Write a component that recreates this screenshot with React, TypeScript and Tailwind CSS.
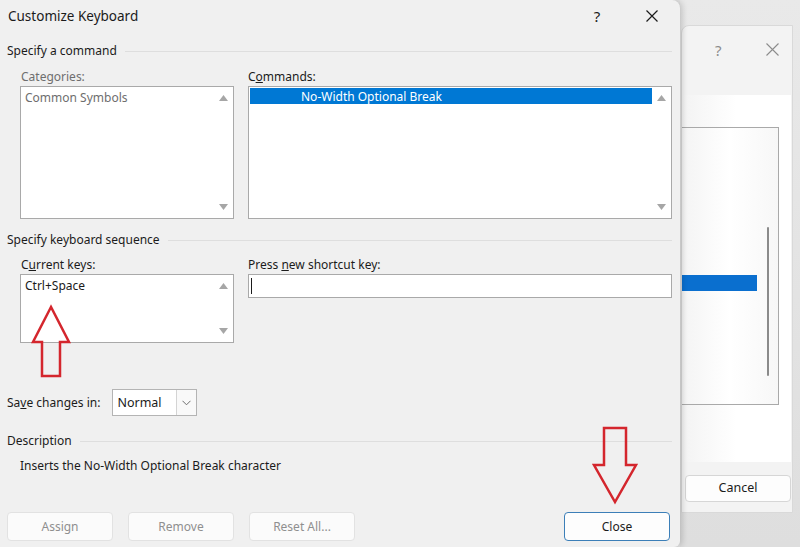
import React from 'react';

const font = { fontFamily: '"Noto Sans", "Open Sans", sans-serif' };

const Up = ({ c = '#a6a6a6' }: { c?: string }) => (
  <svg width="9" height="6" viewBox="0 0 9 6">
    <polygon points="4.5,0 9,6 0,6" fill={c} />
  </svg>
);

const Down = ({ c = '#a6a6a6' }: { c?: string }) => (
  <svg width="9" height="6" viewBox="0 0 9 6">
    <polygon points="0,0 9,0 4.5,6" fill={c} />
  </svg>
);

const Scroll = () => (
  <div className="w-[19px] flex flex-col justify-between items-center py-[8px]">
    <Up />
    <Down />
  </div>
);

const GroupHeader = ({ title }: { title: string }) => (
  <div className="flex items-center pl-[7px] pr-[8px] gap-[8px] text-[12px] text-[#1b1b1b]">
    <span>{title}</span>
    <div className="flex-1 h-px bg-[#dedede]" />
  </div>
);

const Btn = ({ label, primary }: { label: string; primary?: boolean }) => (
  <div
    className={
      'w-[106px] h-[29px] rounded-[4px] flex items-center justify-center text-[12px] ' +
      (primary
        ? 'border border-[#3c7fb8] bg-[#fdfdfd] text-[#1b1b1b]'
        : 'border border-[#e2e2e2] bg-[#fbfbfb] text-[#8f8f8f]')
    }
  >
    {label}
  </div>
);

const App = () => {
  return (
    <div className="w-[800px] h-[547px] flex bg-[#e4e4e4] overflow-hidden relative" style={font}>
      {/* main dialog */}
      <div className="w-[680px] h-[547px] bg-[#f0f0f0] rounded-tr-[8px] rounded-br-[6px] shadow-[2px_0_6px_rgba(0,0,0,0.18)] z-10 flex flex-col shrink-0">
        <div className="h-[32px] flex items-center pl-[8px] pr-[22px]">
          <span className="text-[13.5px] text-[#1b1b1b] flex-1">Customize Keyboard</span>
          <span className="text-[15px] text-[#1b1b1b] w-[20px] text-center mr-[39px]">?</span>
          <svg width="12" height="12" viewBox="0 0 12 12">
            <path d="M0.5 0.5 L11.5 11.5 M11.5 0.5 L0.5 11.5" stroke="#1b1b1b" strokeWidth="1.2" />
          </svg>
        </div>

        <div className="mt-[10px]">
          <GroupHeader title="Specify a command" />
        </div>

        <div className="flex gap-[14px] pl-[20px] mt-[6px]">
          <div className="w-[214px] flex flex-col">
            <div className="text-[12px] text-[#6e6e6e] h-[20px] leading-[22px] pl-px">Categories:</div>
            <div className="h-[133px] border border-[#a9a9a9] bg-white flex">
              <div className="flex-1 pl-[4px] pt-[2px] text-[12px] text-[#6e6e6e]">Common Symbols</div>
              <Scroll />
            </div>
          </div>
          <div className="w-[424px] flex flex-col">
            <div className="text-[12px] text-[#1b1b1b] h-[20px] leading-[22px]">
              C<u>o</u>mmands:
            </div>
            <div className="h-[133px] border border-[#a9a9a9] bg-white flex">
              <div className="flex-1 pl-px pt-px">
                <div className="h-[16px] bg-[#0078d4] text-white text-[12px] leading-[17px] pl-[51px]">
                  No-Width Optional Break
                </div>
              </div>
              <Scroll />
            </div>
          </div>
        </div>

        <div className="mt-[12px]">
          <GroupHeader title="Specify keyboard sequence" />
        </div>

        <div className="flex gap-[14px] pl-[20px] mt-[5px]">
          <div className="w-[214px] flex flex-col">
            <div className="text-[12px] text-[#1b1b1b] h-[20px] leading-[22px] pl-px">
              C<u>u</u>rrent keys:
            </div>
            <div className="h-[69px] border border-[#a9a9a9] bg-white flex">
              <div className="flex-1 pl-[4px] pt-[2px] text-[12px] text-[#1b1b1b]">Ctrl+Space</div>
              <Scroll />
            </div>
          </div>
          <div className="w-[424px] flex flex-col">
            <div className="text-[12px] text-[#1b1b1b] h-[20px] leading-[22px]">
              Press <u>n</u>ew shortcut key:
            </div>
            <div className="h-[24px] border border-[#a9a9a9] bg-white flex items-center pl-[2px]">
              <div className="w-px h-[16px] bg-[#1b1b1b]" />
            </div>
          </div>
        </div>

        <div className="flex items-center pl-[7px] mt-[46px] gap-[12px]">
          <span className="text-[12px] text-[#1b1b1b]">
            Sa<u>v</u>e changes in:
          </span>
          <div className="w-[85px] h-[27px] border border-[#b4b4b4] bg-white flex">
            <div className="flex-1 pl-[4px] text-[12.5px] leading-[25px] text-[#1b1b1b]">Normal</div>
            <div className="w-[20px] border-l border-[#d4d4d4] bg-[#f9f9f9] flex items-center justify-center">
              <svg width="9" height="6" viewBox="0 0 9 6">
                <path d="M0.5 0.8 L4.5 4.8 L8.5 0.8" fill="none" stroke="#6e6e6e" strokeWidth="1" />
              </svg>
            </div>
          </div>
        </div>

        <div className="mt-[16px]">
          <GroupHeader title="Description" />
        </div>
        <div className="pl-[20px] mt-[7px] text-[12px] text-[#1b1b1b]">
          Inserts the No-Width Optional Break character
        </div>

        <div className="flex items-center pl-[7px] pr-[10px] mt-[37px] gap-[15px]">
          <Btn label="Assign" />
          <Btn label="Remove" />
          <Btn label="Reset All..." />
          <div className="flex-1" />
          <Btn label="Close" primary />
        </div>
      </div>

      {/* window behind */}
      <div className="flex-1 bg-gradient-to-b from-[#e9e9e9] to-[#dedede] relative">
        <div className="ml-px mt-[25px] w-[112px] h-[488px] bg-[#f3f3f3] rounded-tl-[8px] border border-[#d9d9d9] flex flex-col">
          <div className="h-[34px] flex items-end pl-[33px] gap-[44px] text-[#8c8c8c]">
            <span className="text-[15px] leading-[20px]">?</span>
            <svg width="13" height="13" viewBox="0 0 13 13" className="mb-[4px]">
              <path d="M0.5 0.5 L12.5 12.5 M12.5 0.5 L0.5 12.5" stroke="#8c8c8c" strokeWidth="1.1" />
            </svg>
          </div>
          <div className="mt-[35px] w-[109px] h-[367px] bg-gradient-to-r from-[#f3f3f3] via-white to-white pt-[32px]">
            <div className="w-[97px] h-[278px] border border-[#a9a9a9] border-l-0 bg-gradient-to-r from-[#f4f4f4] via-white to-[#f7f7f7] flex">
              <div className="flex-1 pt-[147px]">
                <div className="h-[16px] bg-[#0a6fcf]" />
              </div>
              <div className="w-[21px] flex justify-center pt-[99px]">
                <div className="w-[2px] h-[149px] bg-[#8a8a8a] rounded" />
              </div>
            </div>
          </div>
          <div className="mt-[13px] ml-[3px] w-[106px] h-[27px] rounded-[4px] border border-[#d6d6d6] bg-[#fdfdfd] flex items-center justify-center text-[12.5px] text-[#1b1b1b]">
            Cancel
          </div>
        </div>
      </div>

      {/* red annotation arrows */}
      <svg className="absolute left-0 top-0 z-20 pointer-events-none" width="800" height="547">
        <polygon
          points="51,307 33,342 42,342 42,376 60,376 60,342 69,342"
          fill="none"
          stroke="#d4262d"
          strokeWidth="2.5"
          strokeLinejoin="miter"
        />
        <polygon
          points="604,428 626,428 626,465 636,465 615,502 594,465 604,465"
          fill="none"
          stroke="#d4262d"
          strokeWidth="2.5"
          strokeLinejoin="miter"
        />
      </svg>
    </div>
  );
};

export default App;
